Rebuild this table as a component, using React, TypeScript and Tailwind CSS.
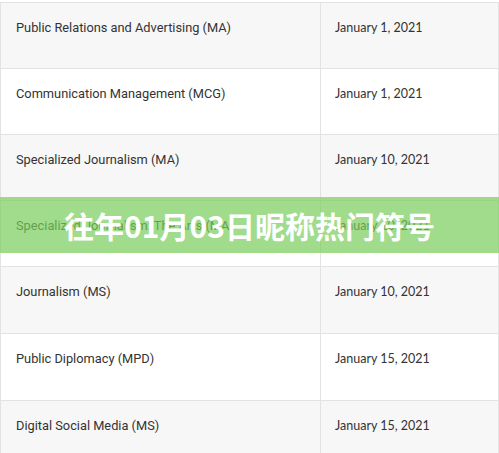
// ─── Programme deadlines table with a green title banner laid over it ────────

const ROWS = [
  { name: "Public Relations and Advertising (MA)", date: "January 1, 2021" },
  { name: "Communication Management (MCG)", date: "January 1, 2021" },
  { name: "Specialized Journalism (MA)", date: "January 10, 2021" },
  { name: "Specialized Journalism: The Arts (MA)", date: "January 10, 2021" },
  { name: "Journalism (MS)", date: "January 10, 2021" },
  { name: "Public Diplomacy (MPD)", date: "January 15, 2021" },
  { name: "Digital Social Media (MS)", date: "January 15, 2021" },
];

const HEIGHTS = ["h-[66px]", "h-[66px]", "h-[66px]", "h-[66px]", "h-[67px]", "h-[67px]", "h-[67px]"];

export default function App() {
  return (
    <div className="relative w-[499px] h-[453px] overflow-hidden bg-white">
      {/* ── Table ───────────────────────────────────────────────────────── */}
      <div className="pt-[2px]">
        <div className="border-t border-l border-r border-[#e3e3e3]">
          {ROWS.map((r, i) => (
            <div
              key={i}
              className={`flex border-b border-[#e3e3e3] ${HEIGHTS[i]} ${i % 2 === 0 ? "bg-[#f7f7f7]" : "bg-white"}`}
            >
              <div className="w-[320px] shrink-0 border-r border-[#e3e3e3] pl-[15px] pt-[15px] text-[12.8px] leading-[20px] text-[#333] font-['Roboto',sans-serif]">
                {r.name}
              </div>
              <div className="flex-1 pl-[14px] pt-[15px] text-[12.5px] leading-[20px] text-[#333] font-['Lato',sans-serif]">
                {r.date}
              </div>
            </div>
          ))}
        </div>
      </div>

      {/* ── Title banner ────────────────────────────────────────────────── */}
      <div className="absolute left-0 right-0 top-[197px] h-[56px] bg-[rgba(120,205,90,0.7)] border-y-2 border-[rgba(160,220,130,0.6)] flex items-center justify-center">
        <span className="text-white font-bold text-[30px] leading-none font-['Noto_Sans_CJK_SC',sans-serif]">
          往年01月03日昵称热门符号
        </span>
      </div>
    </div>
  );
}
